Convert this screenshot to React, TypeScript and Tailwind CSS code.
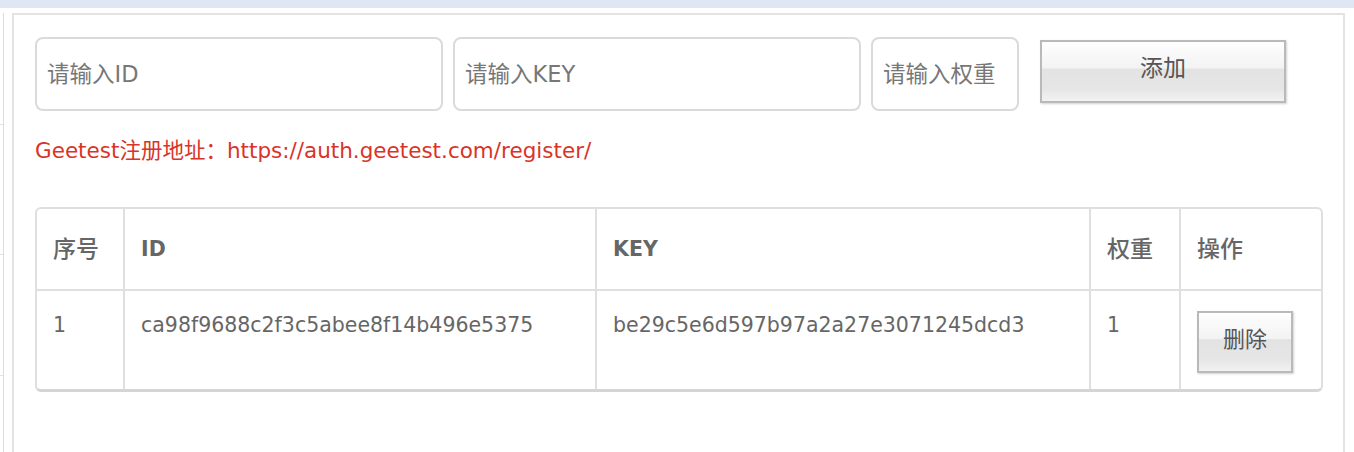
const rows = [
  {
    no: "1",
    id: "ca98f9688c2f3c5abee8f14b496e5375",
    key: "be29c5e6d597b97a2a27e3071245dcd3",
    weight: "1",
  },
];

const cols = "grid grid-cols-[86px_472px_494px_90px_142px]";
const glossy =
  "bg-[linear-gradient(to_bottom,#fefefe_0%,#f3f3f3_44%,#e3e3e3_46%,#e6e6e6_80%,#f2f2f2_100%)] border-2 border-[#b9b9b9] shadow-[1px_1px_2px_rgba(0,0,0,0.18)] text-[#555]";
const inputCls =
  "h-[74px] rounded-[8px] border-2 border-[#dadada] px-[10px] text-[22.5px] text-[#555] placeholder:text-[#777] outline-none";

const App = () => (
  <div className="w-[1354px] h-[452px] overflow-hidden bg-white font-['DejaVu_Sans','Noto_Sans_CJK_SC',sans-serif]">
    <div className="h-[8px] bg-[#dfe8f2]" />
    <div className="flex pt-[5px] h-[444px]">
      {/* cut-off side menu */}
      <div className="w-[4px] border-r border-[#dcdcdc] flex flex-col">
        <div className="h-[112px] border-b border-[#e2e2e2]" />
        <div className="h-[130px] border-b border-[#e2e2e2]" />
        <div className="h-[121px] border-b border-[#e2e2e2]" />
      </div>

      <div className="ml-[8px] w-[1333px] border-2 border-b-0 border-[#e3e3e3] pl-[21px] pr-[20px] pt-[22px]">
        <div className="flex items-start gap-[10px]">
          <input className={`w-[408px] ${inputCls}`} placeholder="请输入ID" />
          <input className={`w-[408px] ${inputCls}`} placeholder="请输入KEY" />
          <input className={`w-[148px] ${inputCls}`} placeholder="请输入权重" />
          <button className={`ml-[11px] mt-[3px] w-[246px] h-[63px] pb-[7px] text-[23px] ${glossy}`}>
            添加
          </button>
        </div>

        <p className="mt-[25px] text-[21.5px] leading-[30px] text-[#da3328]">
          Geetest注册地址：https://auth.geetest.com/register/
        </p>

        <div className="mt-[41px] w-[1288px] rounded-[6px] border-2 border-b-[3px] border-[#dfdfdf] border-b-[#d5d5d5] overflow-hidden text-[20.5px] text-[#666]">
          <div className={`${cols} h-[82px] border-b-2 border-[#dfdfdf]`}>
            <div className="flex items-center px-[16px] text-[23px] font-medium">序号</div>
            <div className="flex items-center px-[16px] border-l-2 border-[#dfdfdf] font-bold">ID</div>
            <div className="flex items-center px-[16px] border-l-2 border-[#dfdfdf] font-bold">KEY</div>
            <div className="flex items-center px-[16px] border-l-2 border-[#dfdfdf] text-[23px] font-medium">权重</div>
            <div className="flex items-center px-[16px] border-l-2 border-[#dfdfdf] text-[23px] font-medium">操作</div>
          </div>
          {rows.map((r) => (
            <div key={r.id} className={`${cols} h-[98px] leading-[28px]`}>
              <div className="px-[16px] pt-[20px]">{r.no}</div>
              <div className="px-[16px] pt-[20px] border-l-2 border-[#dfdfdf]">{r.id}</div>
              <div className="px-[16px] pt-[20px] border-l-2 border-[#dfdfdf]">{r.key}</div>
              <div className="px-[16px] pt-[20px] border-l-2 border-[#dfdfdf]">{r.weight}</div>
              <div className="px-[16px] pt-[20px] border-l-2 border-[#dfdfdf]">
                <button className={`w-[96px] h-[62px] pb-[4px] text-[22px] ${glossy}`}>删除</button>
              </div>
            </div>
          ))}
        </div>
      </div>
    </div>
  </div>
);

export default App;
